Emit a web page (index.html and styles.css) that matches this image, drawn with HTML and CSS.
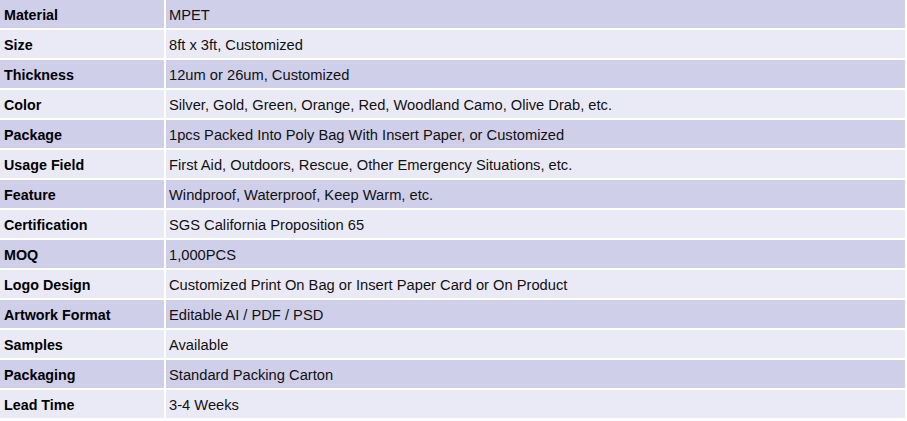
FILE: index.html
```html
<!DOCTYPE html>
<html>
<head>
<meta charset="utf-8">
<link rel="stylesheet" href="styles.css">
</head>
<body>
<div class="specs">
  <div class="row odd"><div class="label">Material</div><div class="value">MPET</div></div>
  <div class="row even"><div class="label">Size</div><div class="value">8ft x 3ft, Customized</div></div>
  <div class="row odd"><div class="label">Thickness</div><div class="value">12um or 26um, Customized</div></div>
  <div class="row even"><div class="label">Color</div><div class="value">Silver, Gold, Green, Orange, Red, Woodland Camo, Olive Drab, etc.</div></div>
  <div class="row odd"><div class="label">Package</div><div class="value">1pcs Packed Into Poly Bag With Insert Paper, or Customized</div></div>
  <div class="row even"><div class="label">Usage Field</div><div class="value">First Aid, Outdoors, Rescue, Other Emergency Situations, etc.</div></div>
  <div class="row odd"><div class="label">Feature</div><div class="value">Windproof, Waterproof, Keep Warm, etc.</div></div>
  <div class="row even"><div class="label">Certification</div><div class="value">SGS California Proposition 65</div></div>
  <div class="row odd"><div class="label">MOQ</div><div class="value">1,000PCS</div></div>
  <div class="row even"><div class="label">Logo Design</div><div class="value">Customized Print On Bag or Insert Paper Card or On Product</div></div>
  <div class="row odd"><div class="label">Artwork Format</div><div class="value">Editable AI / PDF / PSD</div></div>
  <div class="row even"><div class="label">Samples</div><div class="value">Available</div></div>
  <div class="row odd"><div class="label">Packaging</div><div class="value">Standard Packing Carton</div></div>
  <div class="row even"><div class="label">Lead Time</div><div class="value">3-4 Weeks</div></div>
</div>
</body>
</html>
```
FILE: styles.css
```css
html, body {
  margin: 0;
  padding: 0;
  background: #ffffff;
}
.specs {
  display: grid;
  grid-template-columns: 164px 739px;
  row-gap: 2px;
  column-gap: 2px;
  font-family: "Liberation Sans", Arial, sans-serif;
  color: #111111;
}
.row {
  display: contents;
}
.label, .value {
  height: 28px;
  display: flex;
  align-items: center;
  box-sizing: border-box;
  padding-top: 2px;
}
.label {
  font-weight: bold;
  font-size: 14.3px;
  padding-left: 4px;
  color: #000000;
}
.value {
  font-size: 14.7px;
  padding-left: 3px;
}
.odd .label, .odd .value { background: #cfcfea; }
.even .label, .even .value { background: #eaeaf6; }
```
